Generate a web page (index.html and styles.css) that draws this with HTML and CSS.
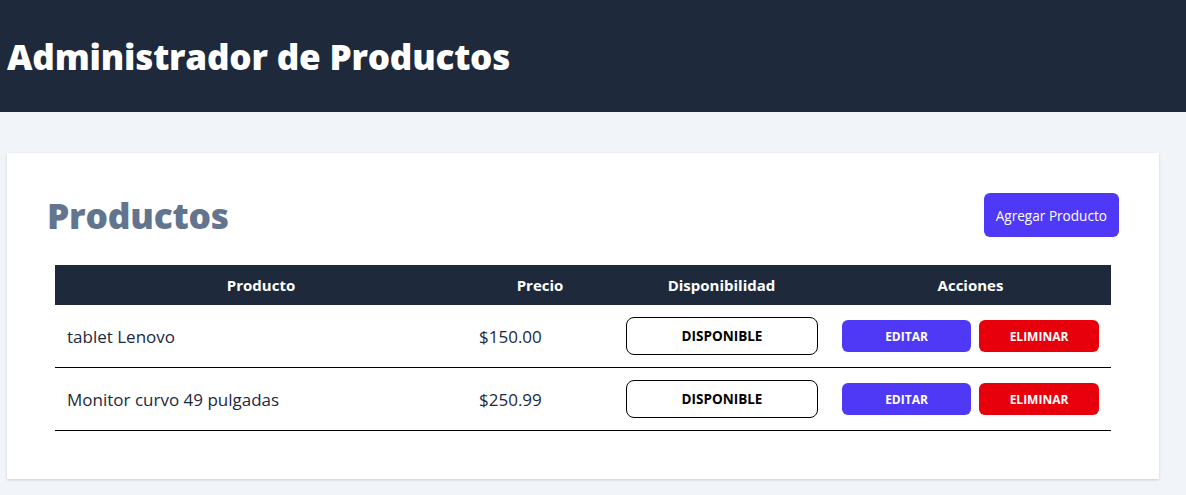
FILE: index.html
```html
<!DOCTYPE html>
<html lang="es">
<head>
<meta charset="utf-8">
<title>Administrador de Productos</title>
<link rel="stylesheet" href="styles.css">
</head>
<body>
<header class="topbar">
  <h1 class="app-title">Administrador de Productos</h1>
</header>
<main class="main">
  <section class="card">
    <div class="card-head">
      <h2 class="card-title">Productos</h2>
      <button class="btn-add">Agregar Producto</button>
    </div>
    <div class="table-wrap">
      <table class="table">
        <colgroup>
          <col class="c-prod"><col class="c-price"><col class="c-avail"><col class="c-act">
        </colgroup>
        <thead>
          <tr>
            <th>Producto</th>
            <th>Precio</th>
            <th>Disponibilidad</th>
            <th>Acciones</th>
          </tr>
        </thead>
        <tbody>
          <tr>
            <td class="cell-text">tablet Lenovo</td>
            <td class="cell-text">$150.00</td>
            <td class="cell-avail"><div class="badge">Disponible</div></td>
            <td><div class="actions"><button class="btn btn-edit">Editar</button><button class="btn btn-del">Eliminar</button></div></td>
          </tr>
          <tr>
            <td class="cell-text">Monitor curvo 49 pulgadas</td>
            <td class="cell-text">$250.99</td>
            <td class="cell-avail"><div class="badge">Disponible</div></td>
            <td><div class="actions"><button class="btn btn-edit">Editar</button><button class="btn btn-del">Eliminar</button></div></td>
          </tr>
        </tbody>
      </table>
    </div>
  </section>
</main>
</body>
</html>
```

FILE: styles.css
```css
* { box-sizing: border-box; }
html, body { margin: 0; padding: 0; }
body {
  background: #f1f5f9;
  font-family: "Open Sans", "Noto Sans", sans-serif;
  color: #1d293d;
  height: 495px;
}
.topbar {
  background: #1e293b;
  height: 112px;
  display: flex;
  align-items: center;
  padding-left: 7px;
}
.app-title {
  margin: 0;
  color: #fff;
  font-family: "Open Sans", sans-serif;
  font-weight: 800;
  font-size: 35.1px;
  letter-spacing: -0.2px;
  line-height: 1.1;
}
.main {
  padding: 41px 0 0 7px;
}
.card {
  width: 1152px;
  background: #fff;
  padding: 40px;
  box-shadow: 0 1px 3px rgba(0,0,0,0.1), 0 1px 2px rgba(0,0,0,0.06);
}
.card-head {
  display: flex;
  justify-content: space-between;
  align-items: center;
}
.card-title {
  margin: 0;
  font-family: "Open Sans", sans-serif;
  font-weight: 800;
  font-size: 35.3px;
  line-height: 40px;
  color: #62748e;
  letter-spacing: -0.2px;
}
.btn-add {
  height: 44px;
  padding: 0 12px;
  background: #4f39f6;
  color: #fff;
  border: none;
  border-radius: 6px;
  font-family: "Open Sans", sans-serif;
  font-size: 13.6px;
}
.table-wrap {
  margin-top: 20px;
  padding: 8px;
}
.table {
  width: 100%;
  border-collapse: collapse;
  table-layout: fixed;
}
.c-prod { width: 412px; }
.c-price { width: 146px; }
.c-avail { width: 217px; }
.c-act { width: 281px; }
.table th {
  background: #1e293b;
  color: #fff;
  height: 40px;
  font-size: 15px;
  font-weight: 700;
  text-align: center;
  padding: 0;
}
.table td {
  padding: 12px;
  border-bottom: 1px solid #000;
  vertical-align: middle;
}
.table td.cell-avail {
  padding-left: 13px;
}
.cell-text {
  font-size: 17px;
  color: #1d293d;
}
.badge {
  height: 38px;
  border: 1px solid #000;
  border-radius: 8px;
  display: flex;
  align-items: center;
  justify-content: center;
  font-size: 13.5px;
  font-weight: 700;
  text-transform: uppercase;
  color: #000;
}
.actions {
  display: grid;
  grid-template-columns: 129px 120px;
  column-gap: 8px;
}
.btn {
  height: 32px;
  border: none;
  border-radius: 6px;
  color: #fff;
  font-family: "Open Sans", sans-serif;
  font-size: 12px;
  font-weight: 700;
  text-transform: uppercase;
}
.btn-edit { background: #4f39f6; }
.btn-del { background: #e7000b; }
```
